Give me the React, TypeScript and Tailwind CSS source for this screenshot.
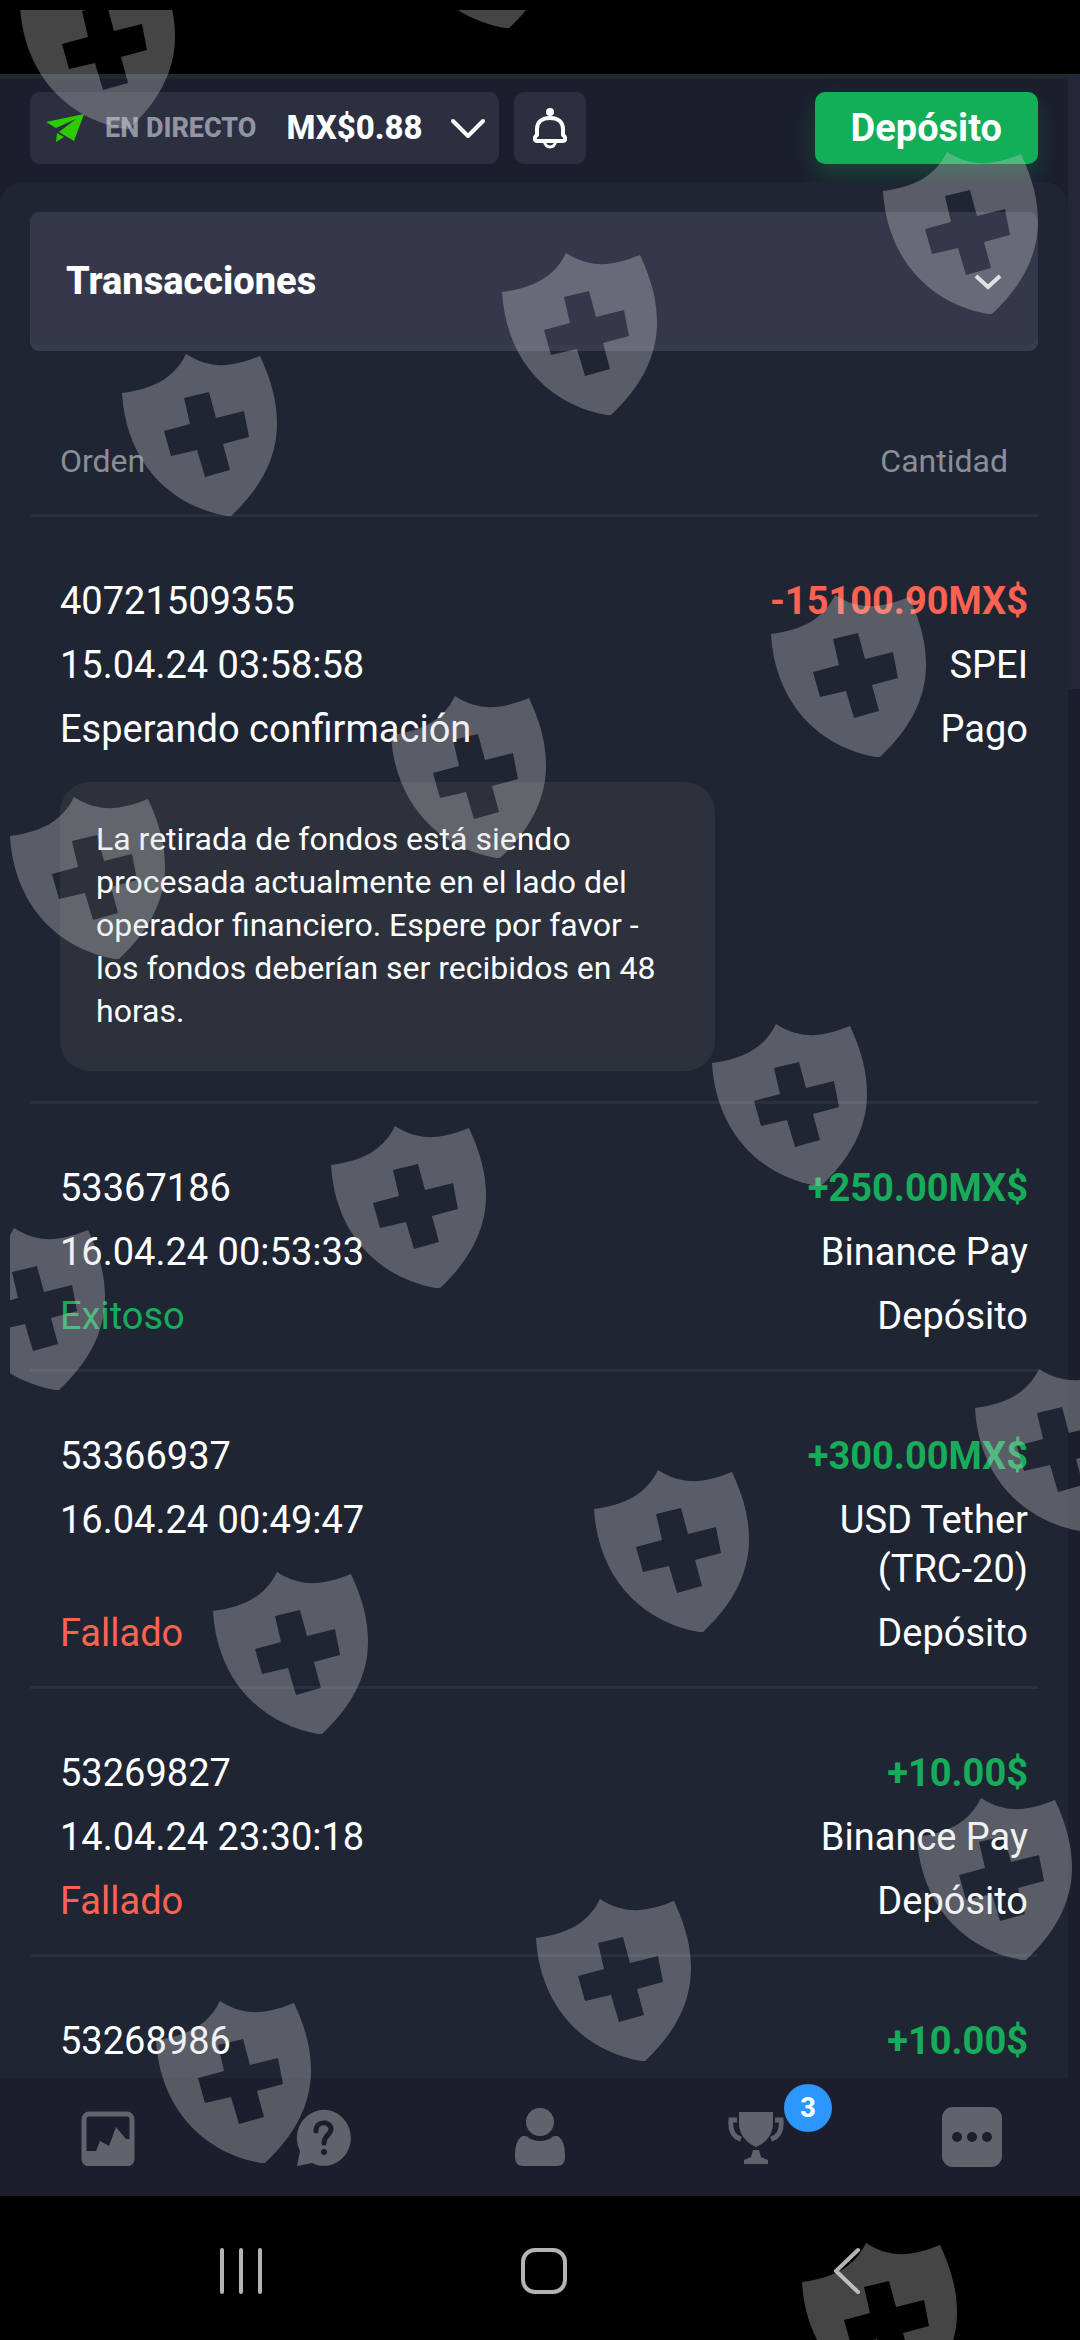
import type { ReactNode } from "react";

type Transaction = {
  id: string;
  amount: string;
  amountColor: string;
  date?: string;
  method?: string;
  status?: string;
  statusColor?: string;
  kind?: string;
  note?: string;
};

const GREEN = "text-[#17ac5a]";
const RED = "text-[#ff6251]";

const transactions: Transaction[] = [
  {
    id: "40721509355",
    date: "15.04.24 03:58:58",
    status: "Esperando confirmación",
    statusColor: "text-white",
    amount: "-15100.90MX$",
    amountColor: RED,
    method: "SPEI",
    kind: "Pago",
    note: "La retirada de fondos está siendo procesada actualmente en el lado del operador financiero. Espere por favor - los fondos deberían ser recibidos en 48 horas.",
  },
  {
    id: "53367186",
    date: "16.04.24 00:53:33",
    status: "Exitoso",
    statusColor: GREEN,
    amount: "+250.00MX$",
    amountColor: GREEN,
    method: "Binance Pay",
    kind: "Depósito",
  },
  {
    id: "53366937",
    date: "16.04.24 00:49:47",
    status: "Fallado",
    statusColor: RED,
    amount: "+300.00MX$",
    amountColor: GREEN,
    method: "USD Tether\n(TRC-20)",
    kind: "Depósito",
  },
  {
    id: "53269827",
    date: "14.04.24 23:30:18",
    status: "Fallado",
    statusColor: RED,
    amount: "+10.00$",
    amountColor: GREEN,
    method: "Binance Pay",
    kind: "Depósito",
  },
  {
    id: "53268986",
    amount: "+10.00$",
    amountColor: GREEN,
  },
];

// top left corner of every shield, in page pixels
const shields = [
  [20, -33],
  [400, -134],
  [883, 152],
  [502, 253],
  [122, 354],
  [771, 595],
  [391, 696],
  [10, 797],
  [712, 1024],
  [331, 1126],
  [-50, 1228],
  [975, 1369],
  [594, 1470],
  [213, 1572],
  [917, 1798],
  [536, 1899],
  [156, 2001],
  [802, 2243],
];

function Shields() {
  return (
    <svg
      aria-hidden="true"
      className="pointer-events-none absolute top-[10px] left-[10px] h-[calc(100%-10px)] w-[calc(100%-10px)] text-[#d1d1d1]/33"
    >
      <defs>
        <path
          id="shield"
          fill="currentColor"
          fillRule="evenodd"
          d="M0 39C30 35 52 25 64 0C88 15 108 14 138 2C150 28 155 48 155 70C155 105 137 136 109 162H105C48 152 4 108 0 39ZM62 44L68 70L42 77L49 102L75 96L83 123L108 116L101 90L127 83L122 57L94 64L87 38Z"
        />
      </defs>
      {shields.map(([x, y]) => (
        <use key={`${x}-${y}`} href="#shield" x={x - 10} y={y - 10} />
      ))}
    </svg>
  );
}

function Header() {
  return (
    <header className="flex h-[108px] items-center border-t-[5px] border-[#20272f] pr-[42px] pb-[5px] pl-[30px]">
      <button className="flex h-[72px] items-center rounded-[10px] bg-[#2b2f3f] pr-[14px] pl-4">
        <svg className="h-8 w-[38px]" viewBox="0 0 38 32" fill="#2ccb00">
          <path d="M38 2L0 10L10 16L30 7L13 20L28 29Z" />
          <path d="M11 21L18 25L10 30Z" />
        </svg>
        <span className="ml-[21px] text-[27px] font-extrabold text-[#9094a3]">EN DIRECTO</span>
        <span className="ml-[30px] text-[33px] font-extrabold text-white">MX$0.88</span>
        <svg
          className="ml-7 h-[22px] w-[34px]"
          viewBox="0 0 34 22"
          fill="none"
          stroke="#fff"
          strokeWidth="4"
          strokeLinecap="round"
          strokeLinejoin="round"
        >
          <path d="M2 4L17 19L32 4" />
        </svg>
      </button>
      <button
        aria-label="Notificaciones"
        className="ml-[15px] flex size-[72px] items-center justify-center rounded-[10px] bg-[#2b2f3f]"
      >
        <svg className="h-[42px] w-[34px]" viewBox="0 0 34 42" fill="none" stroke="#fff" strokeWidth="4">
          <path
            d="M4 28V22C4 15 9 11 17 11S30 15 30 22V28C33 30 33 34 30 34H4C1 34 1 30 4 28Z"
            strokeLinejoin="round"
          />
          <circle cx="17" cy="5" r="4" fill="#fff" stroke="none" />
          <path d="M11 34C12 38 14 40 17 40S22 38 23 34" strokeWidth="3" />
        </svg>
      </button>
      <button className="ml-auto h-[72px] rounded-[10px] bg-[#13ae58] px-9 text-[38px] font-bold text-white shadow-[0_12px_24px_#13ae5845]">
        Depósito
      </button>
    </header>
  );
}

function Row({ left, right, className }: { left: ReactNode; right: ReactNode; className: string }) {
  return (
    <tr className="align-top">
      <td className={`pl-[30px] ${className}`}>{left}</td>
      <td className={`pr-[10px] text-right whitespace-pre-line ${className}`}>{right}</td>
    </tr>
  );
}

function TransactionRows({ item }: { item: Transaction }) {
  return (
    <tbody className="border-b-[3px] border-[#2b303d] text-[38px] leading-[49px] text-white last:border-0">
      <Row
        className="pt-[60px]"
        left={item.id}
        right={<span className={`font-bold ${item.amountColor}`}>{item.amount}</span>}
      />
      {item.date && <Row className="pt-[15px]" left={item.date} right={item.method} />}
      {item.status && (
        <Row
          className="pt-[15px] pb-7"
          left={<span className={item.statusColor}>{item.status}</span>}
          right={item.kind}
        />
      )}
      {item.note && (
        <tr>
          <td className="pb-[30px] pl-[30px]">
            <p className="rounded-[30px] bg-[#2c313b] pt-9 pr-8 pb-[38px] pl-9 text-[32px] leading-[43px]">
              {item.note}
            </p>
          </td>
          <td />
        </tr>
      )}
    </tbody>
  );
}

function TabBar() {
  return (
    <nav className="grid h-[118px] shrink-0 grid-cols-5 items-center bg-[#1c1e2d] text-[#61636c]">
      <button aria-label="Gráfico" className="flex justify-center">
        <svg className="size-[58px]" viewBox="0 0 58 58">
          <rect x="5" y="6" width="48" height="50" rx="5" fill="none" stroke="currentColor" strokeWidth="5" />
          <path d="M5 43H17L21 33L30 38L37 19L47 31H53V55H5Z" fill="currentColor" />
        </svg>
      </button>
      <button aria-label="Ayuda" className="flex justify-center">
        <svg className="size-[58px]" viewBox="0 0 58 58">
          <path d="M2 58L5 43A27 28 0 1 1 17 55Z" fill="currentColor" />
          <path
            d="M21 23C21 12 36 13 36 21C36 27 29 27 29 35"
            fill="none"
            stroke="#1c1e2d"
            strokeWidth="5"
            strokeLinecap="round"
          />
          <circle cx="29" cy="44" r="3" fill="#1c1e2d" />
        </svg>
      </button>
      <button aria-label="Perfil" className="flex justify-center">
        <svg className="size-[58px]" viewBox="0 0 58 58" fill="currentColor">
          <circle cx="29" cy="14" r="14" />
          <path d="M12 28C14 28 16 28 18 30C24 34 34 34 40 30C42 28 44 28 46 28C52 30 54 39 54 48C54 55 51 58 46 58H12C7 58 4 55 4 48C4 39 6 30 12 28Z" />
        </svg>
      </button>
      <button aria-label="Torneos" className="flex justify-center">
        <span className="relative">
          <svg className="size-[58px]" viewBox="0 0 58 58">
            <path d="M12 4H46V15C46 26 40 34 29 39C18 34 12 26 12 15Z" fill="currentColor" />
            <path d="M26 42H32L34 49L41 52V56H17V52L24 49Z" fill="currentColor" />
            <path d="M10 12H4C3 21 6 29 14 31M48 12H54C55 21 52 29 44 31" fill="none" stroke="currentColor" strokeWidth="5" />
          </svg>
          <span className="absolute -top-6 left-[57px] flex size-12 items-center justify-center rounded-full bg-[#2c98ff] text-[27px] font-extrabold text-white">
            3
          </span>
        </span>
      </button>
      <button aria-label="Más" className="flex justify-center">
        <svg className="size-[60px]" viewBox="0 0 60 60">
          <rect width="60" height="60" rx="11" fill="currentColor" />
          <g fill="#1c1e2d">
            <circle cx="15" cy="30" r="5" />
            <circle cx="30" cy="30" r="5" />
            <circle cx="45" cy="30" r="5" />
          </g>
        </svg>
      </button>
    </nav>
  );
}

function SystemBar() {
  return (
    <nav className="grid h-36 shrink-0 grid-cols-3 items-center bg-black pt-[6px] pr-[82px] pl-[90px] text-[#b4b4b4]">
      <button aria-label="Recientes" className="flex justify-center">
        <svg className="size-12" viewBox="0 0 48 48" stroke="currentColor" strokeWidth="4" strokeLinecap="round">
          <path d="M5 3V45M24 3V45M43 3V45" />
        </svg>
      </button>
      <button aria-label="Inicio" className="flex justify-center">
        <svg className="size-12" viewBox="0 0 48 48" fill="none" stroke="currentColor" strokeWidth="4">
          <rect x="3" y="3" width="42" height="42" rx="12" />
        </svg>
      </button>
      <button aria-label="Atrás" className="flex justify-center">
        <svg
          className="size-12"
          viewBox="0 0 48 48"
          fill="none"
          stroke="currentColor"
          strokeWidth="4"
          strokeLinecap="round"
          strokeLinejoin="round"
        >
          <path d="M35 3L13 24L35 45" />
        </svg>
      </button>
    </nav>
  );
}

export default function App() {
  return (
    <div className="relative flex h-screen flex-col overflow-hidden bg-[#1c1e2d] font-[Roboto,sans-serif]">
      <div className="h-[74px] shrink-0 bg-black" />
      <div className="relative flex min-h-0 flex-1 flex-col">
        <Header />
        <main className="mr-3 min-h-0 flex-1 overflow-hidden rounded-t-[24px] bg-[#202533] px-[30px] pt-[30px]">
          <button className="flex h-[139px] w-full items-center justify-between rounded-[9px] bg-[#35384b] px-9 text-[38px] font-extrabold text-white shadow-[inset_0_-6px_#393c51]">
            Transacciones
            <svg className="h-4 w-7" viewBox="0 0 28 16" fill="none" stroke="#e9eaef" strokeWidth="4">
              <path d="M2 2L14 13L26 2" />
            </svg>
          </button>
          <table className="w-full table-fixed border-collapse">
            <colgroup>
              <col className="w-[68%]" />
              <col />
            </colgroup>
            <thead className="border-b-[3px] border-[#2b303d] text-[32px] leading-[49px] text-[#8a8e97]">
              <tr>
                <th className="pt-[86px] pb-7 pl-[30px] text-left font-normal">Orden</th>
                <th className="pt-[86px] pr-[30px] pb-7 text-right font-normal">Cantidad</th>
              </tr>
            </thead>
            {transactions.map((item) => (
              <TransactionRows key={item.id} item={item} />
            ))}
          </table>
        </main>
        <div className="absolute top-0 right-0 h-[615px] w-3 bg-[#24263a]" />
      </div>
      <TabBar />
      <SystemBar />
      <Shields />
    </div>
  );
}
